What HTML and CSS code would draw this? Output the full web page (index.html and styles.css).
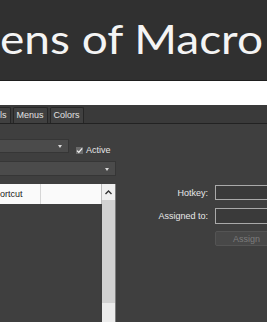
FILE: index.html
```html
<!DOCTYPE html>
<html lang="en">

<head>
    <meta charset="UTF-8">
    <meta name="viewport" content="width=device-width, initial-scale=1.0">
    <title>Screens of Macro</title>
    <link rel="stylesheet" href="styles.css">
</head>

<body>
    <header class="banner">
        <h1 class="banner__title">ens of Macro</h1>
    </header>
    <div class="spacer"></div>
    <div class="window">
        <nav class="tabs">
            <span class="tab tab--cut">ls</span>
            <span class="tab">Menus</span>
            <span class="tab">Colors</span>
        </nav>
        <div class="panel">
            <div class="panel__left">
                <div class="row">
                    <div class="select select--short"><span class="select__arrow"></span></div>
                    <label class="check">
                        <svg class="check__box" width="7" height="7" viewBox="0 0 7 7">
                            <rect width="7" height="7" fill="#6a6a6a"/>
                            <path d="M1 3.6 L2.8 5.4 L6.2 1.4" stroke="#f2f2f2" stroke-width="1.3" fill="none"/>
                        </svg>
                        Active
                    </label>
                </div>
                <div class="select select--wide"><span class="select__arrow"></span></div>
                <div class="list">
                    <div class="list__head">
                        <span class="list__col">ortcut</span>
                        <span class="list__col"></span>
                    </div>
                    <div class="list__body"></div>
                    <div class="scrollbar">
                        <div class="scrollbar__up">
                            <svg width="7" height="5" viewBox="0 0 7 5"><path d="M0.5 4 L3.5 1 L6.5 4" stroke="#333" stroke-width="1.4" fill="none"/></svg>
                        </div>
                        <div class="scrollbar__track"></div>
                        <div class="scrollbar__end"></div>
                    </div>
                </div>
            </div>
            <div class="panel__right">
                <label class="field__label">Hotkey:</label>
                <div class="field__input"></div>
                <label class="field__label">Assigned to:</label>
                <div class="field__input field__input--tall"></div>
                <span></span>
                <button class="btn" disabled>Assign</button>
            </div>
        </div>
    </div>
</body>

</html>
```

FILE: styles.css
```css
* {
  margin: 0;
  padding: 0;
  box-sizing: border-box;
}

body {
  width: 267px;
  height: 322px;
  overflow: hidden;
  background-color: #ffffff;
  font-family: 'Liberation Sans', Arial, sans-serif;
}

.banner {
  height: 81px;
  background-color: #303030;
  border-bottom: 1px solid #1e1e1e;
  padding-top: 15px;
  overflow: hidden;
}

/* the capture is stretched a little wider than the font */
.banner__title {
  font-family: 'Lato', sans-serif;
  font-weight: 400;
  font-size: 40px;
  line-height: 48px;
  color: #f4f4f4;
  white-space: nowrap;
  transform: scaleX(1.15);
  transform-origin: left center;
}

.spacer {
  height: 24px;
  background-color: #ffffff;
}

.window {
  height: 217px;
  background-color: #3f3f3f;
  overflow: hidden;
}

.tabs {
  height: 19px;
  display: flex;
  align-items: flex-end;
  gap: 2px;
  background-color: #3a3a3a;
  border-bottom: 1px solid #222222;
}

.tab {
  height: 16px;
  padding: 0 3px;
  border: 1px solid #262626;
  border-bottom: none;
  border-radius: 2px 2px 0 0;
  background-color: #404040;
  color: #e2e2e2;
  font-size: 9px;
  line-height: 15px;
}

.tab--cut {
  padding-left: 0;
  border-left: none;
  border-radius: 0 2px 0 0;
}

.panel {
  display: flex;
  padding-top: 15px;
}

.panel__left {
  width: 116px;
  flex-shrink: 0;
  display: flex;
  flex-direction: column;
  gap: 8px;
}

.row {
  display: flex;
  align-items: flex-end;
  gap: 7px;
  width: 160px;
}

.select {
  position: relative;
  background-color: #4b4b4b;
  border: 1px solid #363636;
  border-left: none;
}

.select--short {
  width: 69px;
  height: 14px;
  flex-shrink: 0;
}

.select--wide {
  width: 116px;
  height: 15px;
}

.select__arrow {
  position: absolute;
  right: 6px;
  top: 50%;
  margin-top: -1px;
  border-left: 2px solid transparent;
  border-right: 2px solid transparent;
  border-top: 3px solid #d8d8d8;
}

.check {
  display: flex;
  align-items: center;
  gap: 3px;
  margin-bottom: -2px;
  color: #e6e6e6;
  font-size: 9px;
  line-height: 10px;
}

.list {
  display: grid;
  grid-template-columns: 1fr 13px;
  grid-template-rows: 20px 1fr;
  height: 140px;
  border-right: 1px solid #7c7c7c;
}

.list__head {
  display: flex;
  background-color: #fafafa;
  border-right: 1px solid #bdbdbd;
}

.list__col {
  width: 41px;
  border-right: 1px solid #d6d6d6;
  color: #222222;
  font-size: 9px;
  line-height: 20px;
}

.list__col:last-child {
  border-right: none;
}

.list__body {
  background-color: #3f3f3f;
}

.scrollbar {
  grid-row: 1 / 3;
  grid-column: 2;
  display: flex;
  flex-direction: column;
  background-color: #d2d2d2;
}

.scrollbar__up {
  height: 16px;
  display: flex;
  align-items: center;
  justify-content: center;
  background-color: #f0f0f0;
}

.scrollbar__track {
  height: 103px;
  background-color: #d2d2d2;
}

.scrollbar__end {
  flex: 1;
  background-color: #ececec;
}

.panel__right {
  display: grid;
  grid-template-columns: 92px 80px;
  grid-auto-rows: 15px;
  column-gap: 7px;
  row-gap: 8px;
  margin-top: 46px;
  align-content: start;
  align-items: center;
}

.field__label {
  text-align: right;
  color: #e8e8e8;
  font-size: 9px;
}

.field__input {
  height: 15px;
  border: 1px solid #a9a9a9;
  background-color: #3a3a3a;
}

.field__input--tall {
  height: 16px;
}

.btn {
  height: 15px;
  width: 80px;
  border: 1px solid #545454;
  border-radius: 2px;
  background-color: #484848;
  color: #7c7c7c;
  font-family: 'Liberation Sans', Arial, sans-serif;
  font-size: 9px;
  text-align: left;
  padding-left: 17px;
}
```
